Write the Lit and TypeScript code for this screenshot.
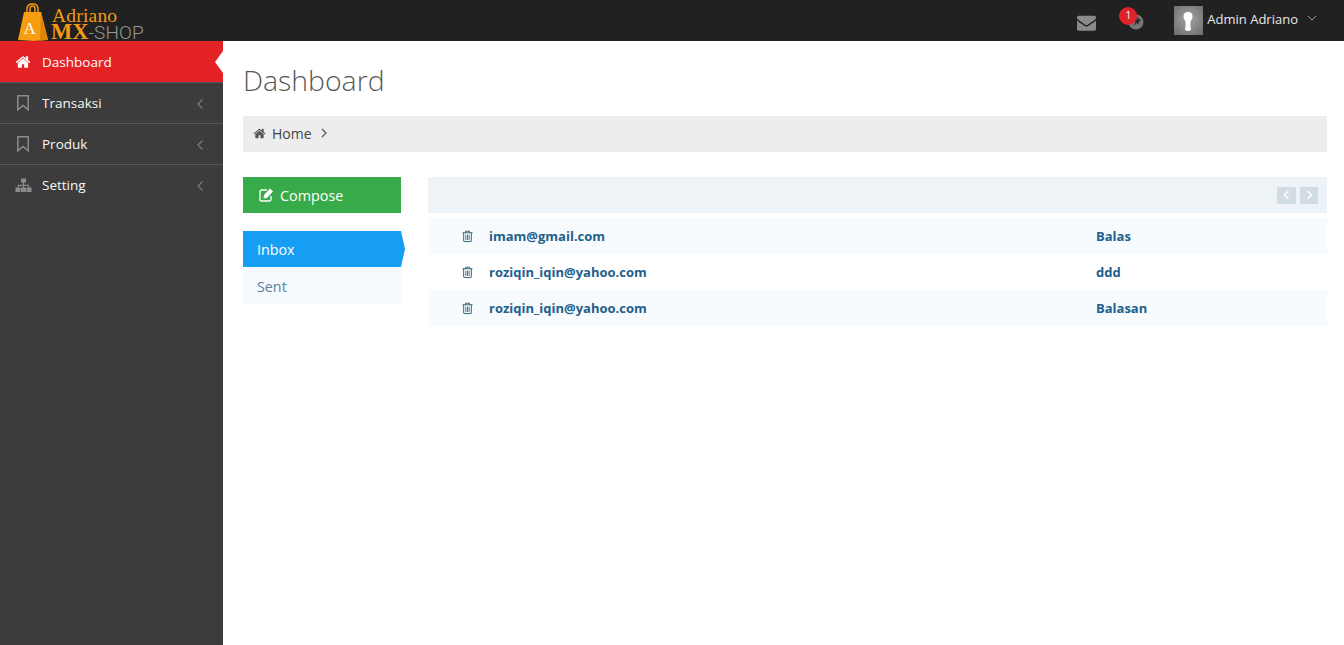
import { LitElement, html, css, svg } from "lit";
import { customElement } from "lit/decorators.js";

const HOME = svg`<path fill="currentColor" d="M1472 992v480q0 26-19 45t-45 19h-384v-384H768v384H384q-26 0-45-19t-19-45V992q0-1 .5-3t.5-3l575-474 575 474q1 2 1 6zm223-69l-62 74q-8 9-21 11h-3q-13 0-21-7L896 424l-692 577q-12 8-24 7-13-2-21-11l-62-74q-8-10-7-23.5t11-21.5l719-599q32-26 76-26t76 26l244 204V288q0-14 9-23t23-9h192q14 0 23 9t9 23v408l219 182q10 8 11 21.5t-7 23.5z"/>`;
const MAIL = svg`<path fill="currentColor" d="M1792 710v794q0 66-47 113t-113 47H160q-66 0-113-47T0 1504V710q44 49 101 87 362 246 497 345 57 42 92.5 65.5t94.5 48 110 24.5h2q51 0 110-24.5t94.5-48 92.5-65.5q170-123 498-345 57-39 100-87zm0-294q0 79-49 151t-122 123q-376 261-468 325-10 7-42.5 30.5t-54 38-52 32.5-57.5 27-50 9h-2q-23 0-50-9t-57.5-27-52-32.5-54-38T639 1015q-91-64-262-182.5T172 690q-62-42-117-115.5T0 438q0-78 41.5-130T160 256h1472q65 0 112.5 47t47.5 113z"/>`;

const bookmark = html`<svg class="ic" viewBox="0 0 16 16"><path d="M2.800 .8h10.400v14l-5.200-4.400-5.200 4.400z" fill="none" stroke="currentColor" stroke-width="1.500"/></svg>`;
const sitemap = html`<svg class="ic wide" viewBox="0 0 17 16"><path fill="currentColor" d="M6 1.500h5v4H9.100v2.300h5.200v2.700h2.200V15h-5V10.500h1.800V9.100H9.100v1.400H11V15H6V10.500h1.900V9.100H3.700v1.400h1.800V15h-5V10.500h2.200V7.800h5.200V5.500H6z"/></svg>`;
const chevLeft = html`<svg class="chev" viewBox="0 0 8 12"><path d="M6.500 1.500 2 6l4.500 4.500" fill="none" stroke="currentColor" stroke-width="1.200"/></svg>`;
const trash = html`<svg class="trash" viewBox="0 0 12 13"><path d="M.5 3h11M4 3V1.200h4V3" fill="none" stroke="#3a6a80" stroke-width="1.100"/><path d="M1.800 3v8.500q0 1 1 1h6.400q1 0 1-1V3" fill="none" stroke="#3a6a80" stroke-width="1.100"/><path d="M4.200 5v5.800M6 5v5.800M7.800 5v5.800" fill="none" stroke="#3a6a80" stroke-width="1"/></svg>`;

@customElement("app-root")
export class AppRoot extends LitElement {
  static styles = css`
    :host {
      display: block;
      height: 645px;
      overflow: hidden;
      font-family: "Open Sans", sans-serif;
      font-size: 14px;
      color: #555;
      background: #fff;
    }
    .topbar {
      height: 41px;
      background: #212121;
      display: flex;
      align-items: center;
    }
    .logo {
      display: flex;
      width: 223px;
      height: 41px;
      padding: 3px 0 0 18px;
      box-sizing: border-box;
      gap: 3px;
    }
    .bag { width: 30px; height: 38px; flex: none; }
    .logo-text {
      display: flex;
      flex-direction: column;
      font-family: "Liberation Serif", serif;
      color: #f39a13;
    }
    .logo-a { font-size: 19.500px; line-height: 16px; padding: 5px 0 0 1px; letter-spacing: 0.2px; }
    .logo-b { font-size: 22.500px; line-height: 16px; white-space: nowrap; font-weight: 700; }
    .logo-b span { font-family: "Roboto", sans-serif; font-weight: 300; font-size: 19px; color: #979797; letter-spacing: 0.1px; }
    .top-right { margin-left: auto; display: flex; align-items: center; padding-right: 27px; }
    .mail { width: 19px; height: 19px; color: #8a8a8a; margin-top: 4px; display: block; }
    .notif { position: relative; width: 16px; height: 16px; margin: 3px 0 0 32px; }
    .notif svg { display: block; width: 16px; height: 16px; }
    .badge {
      position: absolute;
      left: -9px;
      top: -7px;
      width: 18px;
      height: 18px;
      border-radius: 50%;
      background: #e0222a;
      color: #fff;
      font-size: 10px;
      line-height: 17px;
      text-align: center;
    }
    .avatar {
      width: 29px;
      height: 29px;
      margin: 0 4px 0 30px;
      display: block;
    }
    .name { color: #e8e8e8; font-size: 13px; margin-bottom: 3px; white-space: nowrap; }
    .caret { width: 10px; height: 6px; margin: 0 0 6px 9px; color: #999; display: block; }
    .body { display: flex; height: 604px; }
    .side { width: 223px; flex: none; background: #3c3c3c; }
    .item {
      height: 41px;
      box-sizing: border-box;
      border-top: 1px solid #585858;
      display: flex;
      align-items: center;
      padding: 0 19px 0 15px;
      color: #f7f7f7;
      position: relative;
      font-size: 13.500px;
    }
    .item.active { background: #e32226; color: #fff; border-top: 0; }
    .item.active::after {
      content: "";
      position: absolute;
      right: 0;
      top: 10px;
      border-style: solid;
      border-width: 11px 8px 11px 0;
      border-color: transparent #fff transparent transparent;
      width: 0;
      height: 0;
    }
    .ic { width: 16px; height: 16px; color: #8b8b8b; margin-right: 11px; flex: none; display: block; }
    .ic.wide { width: 17px; margin-right: 10px; }
    .item.active .ic { color: #fff; }
    .chev { width: 8px; height: 12px; margin: 1px 0 0 auto; color: #7c7c7c; display: block; }
    .main { flex: 1; padding: 0 17px 0 20px; min-width: 0; }
    h1 {
      margin: 0;
      height: 75px;
      font-size: 28.400px;
      font-weight: 300;
      line-height: 78px;
      color: #595959;
    }
    .crumb {
      height: 36px;
      background: #ededed;
      display: flex;
      align-items: center;
      padding: 0 0 2px 10px;
      box-sizing: border-box;
      color: #444;
      font-size: 14px;
    }
    .crumb svg.h { width: 13px; height: 13px; color: #555; margin-right: 6px; display: block; }
    .crumb svg.c { width: 6px; height: 10px; margin-left: 9px; color: #555; display: block; }
    .mailbox { display: flex; margin-top: 25px; gap: 27px; }
    .left { width: 158px; flex: none; }
    .compose {
      height: 36px;
      background: #37ab4a;
      color: #fff;
      display: flex;
      align-items: center;
      padding-left: 15px;
      font-size: 14.400px;
      gap: 6px;
    }
    .compose svg { width: 16px; height: 16px; display: block; }
    .folders { margin-top: 18px; }
    .folder {
      height: 37px;
      line-height: 39px;
      padding-left: 14px;
      background: #f5fafe;
      color: #5d7f9b;
      font-size: 14.300px;
      position: relative;
    }
    .folder.on { height: 36px; line-height: 38px; background: #169ef4; color: #fff; }
    .folder.on::after {
      content: "";
      position: absolute;
      right: -4px;
      top: 0;
      border-style: solid;
      border-width: 18px 0 18px 4px;
      border-color: transparent transparent transparent #169ef4;
      width: 0;
      height: 0;
    }
    .right { flex: 1; min-width: 0; }
    .tools {
      height: 36px;
      background: #eef3f7;
      display: flex;
      align-items: center;
      justify-content: flex-end;
      gap: 4px;
      padding-right: 9px;
      margin-bottom: 5px;
    }
    .tool {
      height: 17px;
      background: #d1dce3;
      display: flex;
      align-items: center;
      justify-content: center;
      color: #fff;
    }
    .tool svg { width: 7px; height: 10px; display: block; }
    .row {
      height: 36px;
      display: flex;
      align-items: center;
      font-weight: 700;
      font-size: 13px;
      color: #22608c;
    }
    .row:nth-child(odd) { background: #f7fbfe; }
    .trash { width: 11px; height: 12px; margin-left: 34px; display: block; flex: none; }
    .from { margin-left: 16px; width: 607px; flex: none; }
  `;

  render() {
    const rows = [
      ["imam@gmail.com", "Balas"],
      ["roziqin_iqin@yahoo.com", "ddd"],
      ["roziqin_iqin@yahoo.com", "Balasan"],
    ];
    return html`
      <div class="topbar">
        <div class="logo">
          <svg class="bag" viewBox="0 0 30 38">
            <path d="M9 11V6q0-5 5.500-5T20 6v5M12 11V6q0-3 2.500-3T17 6v5" fill="none" stroke="#f39a13" stroke-width="1.500"/>
            <path d="M6 9h17l7 28-14 1-16-1z" fill="#f89c10"/>
            <path d="M23 9l7 28-8 .5z" fill="#dd8408"/>
            <text x="5.500" y="31" font-family="Liberation Serif, serif" font-size="17" fill="#fff">A</text>
          </svg>
          <div class="logo-text">
            <div class="logo-a">Adriano</div>
            <div class="logo-b">MX<span>-SHOP</span></div>
          </div>
        </div>
        <div class="top-right">
          <svg class="mail" viewBox="0 0 1792 1792">${MAIL}</svg>
          <div class="notif">
            <svg viewBox="0 0 16 16">
              <circle cx="8" cy="8" r="7.500" fill="#777"/>
              <path d="M9 3l4 3.500-2 1-.5 3L8.500 9 5 13l2.500-5-2-1.500 3-.5z" fill="#2b2b2b"/>
            </svg>
            <div class="badge">1</div>
          </div>
          <svg class="avatar" viewBox="0 0 29 29">
            <defs>
              <radialGradient id="av" cx="50%" cy="45%" r="70%">
                <stop offset="0" stop-color="#a5a5a5"/>
                <stop offset="1" stop-color="#6e6e6e"/>
              </radialGradient>
            </defs>
            <rect width="29" height="29" fill="url(#av)"/>
            <path d="M14.500 6q4 0 4 4.500 0 3-2 5-.5 3 .5 8.500-3 2-6 0 1-5.500.5-8.500-2-2-2-5 0-4.500 4.500-4.500z" fill="#fff"/>
          </svg>
          <span class="name">Admin Adriano</span>
          <svg class="caret" viewBox="0 0 10 6"><path d="M1 1l4 4 4-4" fill="none" stroke="currentColor" stroke-width="1"/></svg>
        </div>
      </div>
      <div class="body">
        <nav class="side">
          <div class="item active">
            <svg class="ic" viewBox="0 0 1792 1792">${HOME}</svg>Dashboard
          </div>
          <div class="item">${bookmark}Transaksi${chevLeft}</div>
          <div class="item">${bookmark}Produk${chevLeft}</div>
          <div class="item">${sitemap}Setting${chevLeft}</div>
        </nav>
        <main class="main">
          <h1>Dashboard</h1>
          <div class="crumb">
            <svg class="h" viewBox="0 0 1792 1792">${HOME}</svg>
            Home
            <svg class="c" viewBox="0 0 6 10"><path d="M1 1l4 4-4 4" fill="none" stroke="currentColor" stroke-width="1.200"/></svg>
          </div>
          <div class="mailbox">
            <div class="left">
              <div class="compose">
                <svg viewBox="0 0 16 16">
                  <path d="M13 9v3.500q0 1.500-1.500 1.500h-8Q2 14 2 12.500v-8Q2 3 3.500 3H9" fill="none" stroke="#fff" stroke-width="1.300"/>
                  <path d="M6 8l6-6.500 3 3L9 11l-3.500.5z" fill="#fff"/>
                </svg>
                Compose
              </div>
              <div class="folders">
                <div class="folder on">Inbox</div>
                <div class="folder">Sent</div>
              </div>
            </div>
            <div class="right">
              <div class="tools">
                <div class="tool" style="width:19px">
                  <svg viewBox="0 0 7 10"><path d="M5.500 1 1.500 5l4 4" fill="none" stroke="currentColor" stroke-width="1.500"/></svg>
                </div>
                <div class="tool" style="width:18px">
                  <svg viewBox="0 0 7 10"><path d="M1.500 1l4 4-4 4" fill="none" stroke="currentColor" stroke-width="1.500"/></svg>
                </div>
              </div>
              <div>
                ${rows.map(
                  ([from, subject]) => html`
                    <div class="row">
                      ${trash}
                      <span class="from">${from}</span>
                      <span>${subject}</span>
                    </div>
                  `
                )}
              </div>
            </div>
          </div>
        </main>
      </div>
    `;
  }
}
